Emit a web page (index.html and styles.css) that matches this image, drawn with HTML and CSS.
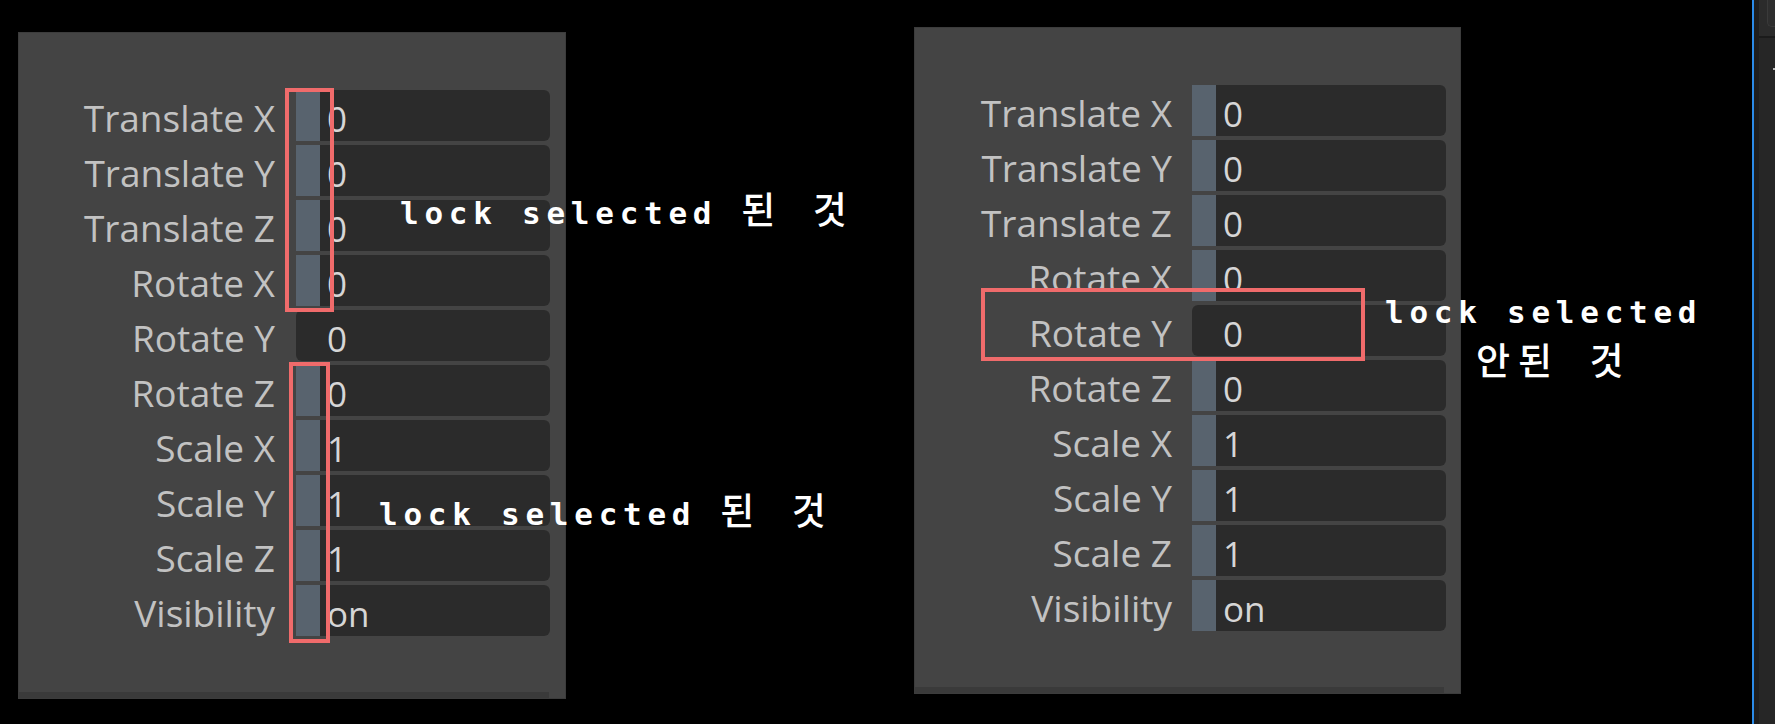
FILE: index.html
```html
<!DOCTYPE html>
<html lang="ko">
<head>
<meta charset="utf-8">
<title>Lock selected</title>
<link rel="stylesheet" href="styles.css">
</head>
<body>
<div class="screen">
  <main class="canvas">
    <section class="panel panel-a">
      <div class="attr-list">
        <div class="row"><span class="label">Translate X</span><div class="field locked"><span class="lock"></span><span class="value">0</span></div></div>
        <div class="row"><span class="label">Translate Y</span><div class="field locked"><span class="lock"></span><span class="value">0</span></div></div>
        <div class="row"><span class="label">Translate Z</span><div class="field locked"><span class="lock"></span><span class="value">0</span></div></div>
        <div class="row"><span class="label">Rotate X</span><div class="field locked"><span class="lock"></span><span class="value">0</span></div></div>
        <div class="row"><span class="label">Rotate Y</span><div class="field"><span class="lock"></span><span class="value">0</span></div></div>
        <div class="row"><span class="label">Rotate Z</span><div class="field locked"><span class="lock"></span><span class="value">0</span></div></div>
        <div class="row"><span class="label">Scale X</span><div class="field locked"><span class="lock"></span><span class="value">1</span></div></div>
        <div class="row"><span class="label">Scale Y</span><div class="field locked"><span class="lock"></span><span class="value">1</span></div></div>
        <div class="row"><span class="label">Scale Z</span><div class="field locked"><span class="lock"></span><span class="value">1</span></div></div>
        <div class="row"><span class="label">Visibility</span><div class="field locked"><span class="lock"></span><span class="value">on</span></div></div>
      </div>
      <div class="panel-foot"></div>
    </section>

    <section class="panel panel-b">
      <div class="attr-list">
        <div class="row"><span class="label">Translate X</span><div class="field locked"><span class="lock"></span><span class="value">0</span></div></div>
        <div class="row"><span class="label">Translate Y</span><div class="field locked"><span class="lock"></span><span class="value">0</span></div></div>
        <div class="row"><span class="label">Translate Z</span><div class="field locked"><span class="lock"></span><span class="value">0</span></div></div>
        <div class="row"><span class="label">Rotate X</span><div class="field locked"><span class="lock"></span><span class="value">0</span></div></div>
        <div class="row"><span class="label">Rotate Y</span><div class="field"><span class="lock"></span><span class="value">0</span></div></div>
        <div class="row"><span class="label">Rotate Z</span><div class="field locked"><span class="lock"></span><span class="value">0</span></div></div>
        <div class="row"><span class="label">Scale X</span><div class="field locked"><span class="lock"></span><span class="value">1</span></div></div>
        <div class="row"><span class="label">Scale Y</span><div class="field locked"><span class="lock"></span><span class="value">1</span></div></div>
        <div class="row"><span class="label">Scale Z</span><div class="field locked"><span class="lock"></span><span class="value">1</span></div></div>
        <div class="row"><span class="label">Visibility</span><div class="field locked"><span class="lock"></span><span class="value">on</span></div></div>
      </div>
      <div class="panel-foot"></div>
    </section>

    <div class="mark mark-1"></div>
    <div class="mark mark-2"></div>
    <div class="mark mark-3"></div>

    <p class="note note-1">lock selected<span class="ko">된 것</span></p>
    <p class="note note-2">lock selected<span class="ko">된 것</span></p>
    <p class="note note-3"><span class="line">lock selected</span><span class="line line-ko"><span class="ko">안된 것</span></span></p>
  </main>

  <aside class="side">
    <div class="side-inner">
      <div class="side-head"><span class="side-btn"></span></div>
      <div class="side-body"><span class="side-tick"></span></div>
    </div>
  </aside>
</div>
</body>
</html>
```

FILE: styles.css
```css
* { box-sizing: border-box; }

html, body {
  margin: 0;
  padding: 0;
  background: #000;
}

.screen {
  display: flex;
  width: 1775px;
  height: 724px;
  overflow: hidden;
}

.canvas {
  position: relative;
  flex: 0 0 1752px;
  display: flex;
  align-items: flex-start;
}

/* ---------- attribute panels ---------- */
.panel {
  position: relative;
  width: 548px;
  height: 667px;
  background: #444444;
  border: 1px solid #3c3c3c;
  padding: 55px 15px 0 0;
  font-family: "Open Sans", "Liberation Sans", sans-serif;
}

.panel-a { margin: 32px 0 0 18px; }
.panel-b { margin: 27px 0 0 348px; width: 547px; padding-right: 14px; }

.attr-list {
  display: flex;
  flex-direction: column;
  gap: 4px;
}

.row {
  display: grid;
  grid-template-columns: 1fr 254px;
  column-gap: 21px;
  height: 51px;
  align-items: center;
}

.panel-b .row { column-gap: 20px; }

.label {
  text-align: right;
  font-size: 37px;
  line-height: 51px;
  color: #c2c2c2;
  letter-spacing: 0;
  white-space: nowrap;
  padding-top: 4px;
}

.field {
  display: flex;
  height: 51px;
  background: #2b2b2b;
  border-radius: 6px;
}

.lock {
  flex: 0 0 24px;
  background: transparent;
}

.field.locked .lock { background: #58636e; }

.value {
  padding-left: 7px;
  font-size: 35px;
  line-height: 51px;
  color: #d6d6d6;
  padding-top: 3px;
}

.panel-foot {
  position: absolute;
  left: 0;
  right: 16px;
  bottom: 0;
  height: 6px;
  background: #3a3a3a;
}

/* ---------- red highlight boxes ---------- */
.mark {
  position: absolute;
  border: 4px solid #f06b6b;
}

.mark-1 { left: 285px; top: 88px;  width: 49px;  height: 224px; }
.mark-2 { left: 289px; top: 362px; width: 41px;  height: 281px; }
.mark-3 { left: 981px; top: 288px; width: 384px; height: 73px; }

/* ---------- annotations ---------- */
.note {
  position: absolute;
  margin: 0;
  color: #ffffff;
  font-family: "DejaVu Sans Mono", "Liberation Mono", monospace;
  font-weight: 700;
  font-size: 31px;
  line-height: 31px;
  letter-spacing: 5.74px;
  white-space: nowrap;
}

.ko {
  font-family: "Noto Sans CJK KR", sans-serif;
  font-size: 37px;
  font-weight: 500;
  line-height: 0;
  letter-spacing: 8px;
  word-spacing: 11px;
}

.note-1 .ko,
.note-2 .ko { margin-left: 24px; }

.note-1 { left: 400px; top: 198px; }
.note-2 { left: 379px; top: 499px; }

.note-3 { left: 1385px; top: 297px; }
.note-3 .line { display: block; }
.note-3 .line-ko {
  line-height: 72px;
  padding-left: 91px;
}

/* ---------- right edge of the window ---------- */
.side {
  flex: 1;
  border-left: 2px solid #2b8be8;
  background: #1e1e1e;
  padding-left: 5px;
}

.side-inner {
  height: 100%;
  display: flex;
  flex-direction: column;
  background: #262626;
}

.side-head {
  height: 38px;
  background: #2b2b2b;
  border-bottom: 2px solid #1b1b1b;
  padding: 0 0 0 8px;
}

.side-btn {
  display: block;
  height: 27px;
  border: 1px solid #3a3a3a;
  border-right: none;
  border-top: none;
  border-radius: 0 0 0 5px;
  background: #2e2e2e;
}

.side-body {
  flex: 1;
  padding: 30px 0 0 14px;
}

.side-tick {
  display: block;
  height: 2px;
  background: #bbbbbb;
}
```
